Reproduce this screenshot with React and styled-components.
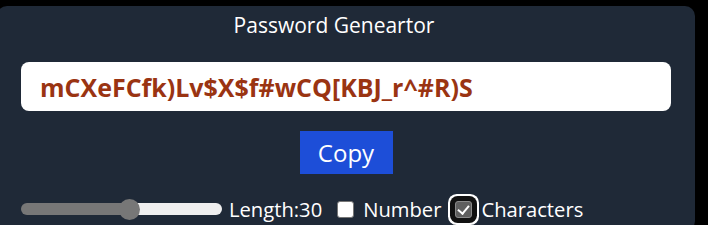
import React, { useState } from "react";
import styled, { createGlobalStyle } from "styled-components";

const Global = createGlobalStyle`
  html, body { margin: 0; padding: 0; background: #000; }
  body { font-family: "Open Sans", "Noto Sans", sans-serif; overflow: hidden; }
  * { box-sizing: border-box; }
`;

const Card = styled.div`
  width: 698px;
  margin: 6px 0 0 -3px;
  height: 225px;
  background: #1f2937;
  border-radius: 10px;
  padding: 5px 24px 0;
  display: flex;
  flex-direction: column;
  align-items: center;
`;

const Title = styled.h1`
  margin: 0;
  padding-right: 24px;
  font-size: 21px;
  line-height: 28px;
  font-weight: 400;
  color: #fff;
`;

const Output = styled.input`
  margin-top: 23px;
  width: 100%;
  height: 49px;
  border: none;
  outline: none;
  border-radius: 8px;
  background: #fff;
  padding: 0 19px;
  font-family: inherit;
  font-size: 25px;
  font-weight: 700;
  color: #9a3412;
`;

const CopyButton = styled.button`
  margin-top: 20px;
  width: 93px;
  height: 43px;
  border: none;
  background: #1d4ed8;
  color: #fff;
  font-family: inherit;
  font-size: 24px;
  padding: 0;
`;

const Controls = styled.div`
  align-self: stretch;
  margin-top: 19px;
  height: 32px;
  display: flex;
  align-items: center;
  color: #fff;
  font-size: 20.2px;
`;

const Slider = styled.input`
  -webkit-appearance: none;
  appearance: none;
  width: 201px;
  height: 12px;
  margin: 0 7px 0 0;
  border-radius: 6px;
  background: linear-gradient(to right, #777 0, #777 ${(p) => p.$fill}%, #efefef ${(p) => p.$fill}%, #efefef 100%);
  &::-webkit-slider-thumb {
    -webkit-appearance: none;
    width: 21px;
    height: 21px;
    border-radius: 50%;
    background: #777;
  }
`;

const Label = styled.label`
  margin-right: ${(p) => p.$mr || 0}px;
  white-space: nowrap;
  line-height: 28px;
`;

const Check = styled.input`
  -webkit-appearance: none;
  appearance: none;
  width: 17px;
  height: 17px;
  margin: 0 9px 0 0;
  border-radius: 3px;
  position: relative;
  background: ${(p) => (p.checked ? "#5f5f5f" : "#fff")};
  border: 1px solid ${(p) => (p.checked ? "#8a8a8a" : "#767676")};
  box-shadow: ${(p) => (p.$focus ? "0 0 0 5px #111, 0 0 0 7px #fff" : "none")};
  &:checked::after {
    content: "";
    position: absolute;
    left: 4px;
    top: 1px;
    width: 5px;
    height: 9px;
    border: solid #fff;
    border-width: 0 2.5px 2.5px 0;
    transform: rotate(40deg);
  }
`;

export default function App() {
  const [len] = useState(30);
  const [num, setNum] = useState(false);
  const [chars, setChars] = useState(true);
  return (
    <>
      <Global />
      <Card>
        <Title>Password Geneartor</Title>
        <Output readOnly value="mCXeFCfk)Lv$X$f#wCQ[KBJ_r^#R)S" />
        <CopyButton>Copy</CopyButton>
        <Controls>
          <Slider type="range" min={6} max={50} value={len} readOnly $fill={54} />
          <Label $mr={15}>Length:{len}</Label>
          <Check type="checkbox" checked={num} onChange={() => setNum(!num)} />
          <Label $mr={14}>Number</Label>
          <Check type="checkbox" checked={chars} $focus onChange={() => setChars(!chars)} />
          <Label>Characters</Label>
        </Controls>
      </Card>
    </>
  );
}
